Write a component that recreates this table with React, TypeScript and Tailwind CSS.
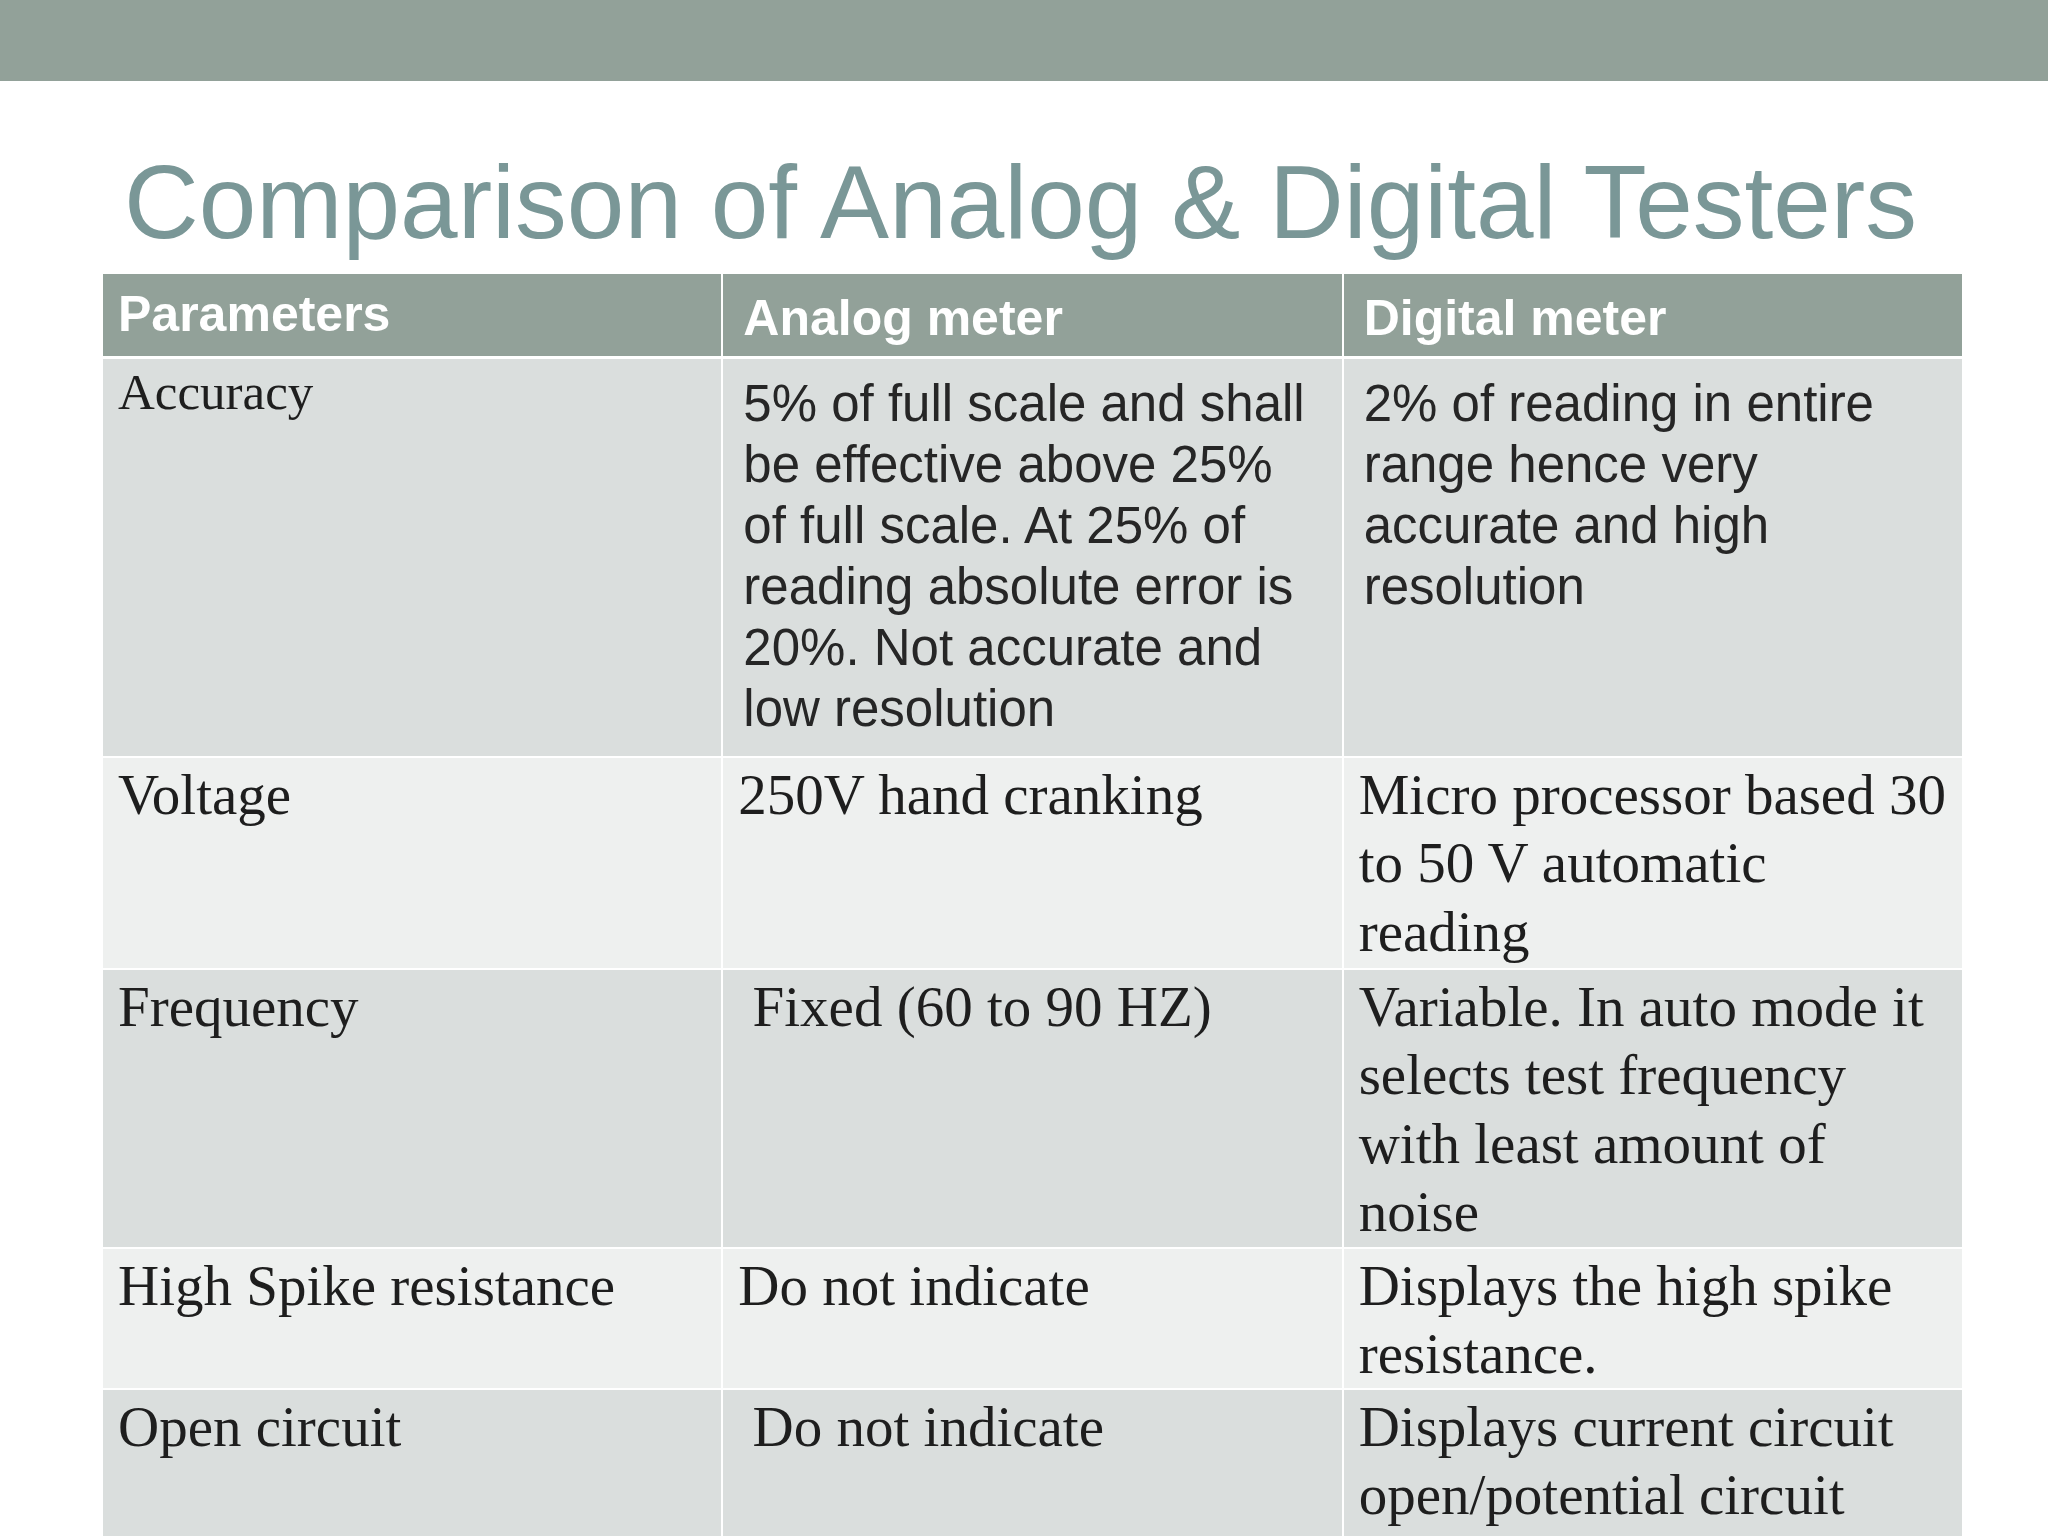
type Cell = {
	lines: string[];
	kind: "serif" | "sans";
	small?: boolean;
};

type Row = {
	height: string;
	bg: string;
	cells: Cell[];
};

const rows: Row[] = [
	{
		height: "h-[397px]",
		bg: "bg-[#dadedd]",
		cells: [
			{ lines: ["Accuracy"], kind: "serif", small: true },
			{
				lines: [
					"5% of full scale and shall",
					"be effective above 25%",
					"of full scale. At 25% of",
					"reading absolute error is",
					"20%. Not accurate and",
					"low resolution",
				],
				kind: "sans",
			},
			{
				lines: ["2% of reading in entire", "range hence very", "accurate and high", "resolution"],
				kind: "sans",
			},
		],
	},
	{
		height: "h-[210px]",
		bg: "bg-[#eef0ef]",
		cells: [
			{ lines: ["Voltage"], kind: "serif" },
			{ lines: ["250V hand cranking"], kind: "serif" },
			{ lines: ["Micro processor based 30", "to 50 V automatic", "reading"], kind: "serif" },
		],
	},
	{
		height: "h-[277px]",
		bg: "bg-[#dadedd]",
		cells: [
			{ lines: ["Frequency"], kind: "serif" },
			{ lines: ["\u00a0Fixed (60 to 90 HZ)"], kind: "serif" },
			{
				lines: ["Variable. In auto mode it", "selects test frequency", "with least amount of", "noise"],
				kind: "serif",
			},
		],
	},
	{
		height: "h-[139px]",
		bg: "bg-[#eef0ef]",
		cells: [
			{ lines: ["High Spike resistance"], kind: "serif" },
			{ lines: ["Do not indicate"], kind: "serif" },
			{ lines: ["Displays the high spike", "resistance."], kind: "serif" },
		],
	},
	{
		height: "h-[160px]",
		bg: "bg-[#dadedd]",
		cells: [
			{ lines: ["Open circuit"], kind: "serif" },
			{ lines: ["\u00a0Do not indicate"], kind: "serif" },
			{ lines: ["Displays current circuit", "open/potential circuit"], kind: "serif" },
		],
	},
];

function TableCell({ cell, bg }: { cell: Cell; bg: string }) {
	const style =
		cell.kind === "sans"
			? "pl-[20px] pt-[14px] font-['Liberation_Sans',Arial,sans-serif] text-[51px] leading-[61px] text-[#262626]"
			: cell.small
				? "pl-[15px] pt-[3px] font-['Liberation_Serif','Times_New_Roman',serif] text-[51px] leading-[61px] text-[#1e1e1e]"
				: "pl-[15px] pt-[3px] font-['Liberation_Serif','Times_New_Roman',serif] text-[57px] leading-[68.5px] text-[#1e1e1e]";

	return (
		<div className={`${bg} ${style} whitespace-nowrap overflow-hidden`}>
			{cell.lines.map((line) => (
				<div key={line}>{line}</div>
			))}
		</div>
	);
}

export default function App() {
	return (
		<div className="w-[2048px] h-[1536px] overflow-hidden bg-white">
			<div className="h-[81px] bg-[#92a199]" />
			<h1 className="mt-[70px] pl-[124px] font-['Liberation_Sans',Arial,sans-serif] text-[103.5px] leading-none text-[#7a9797]">
				Comparison of Analog &amp; Digital Testers
			</h1>
			<div className="mt-[19px] ml-[103px] w-[1859px] flex flex-col gap-[2px]">
				<div className="grid grid-cols-3 gap-x-[2px] h-[82px] mb-[1px] font-['Liberation_Sans',Arial,sans-serif] text-[50px] leading-[60px] font-bold text-white">
					<div className="bg-[#92a199] pl-[15px] pt-[10px]">Parameters</div>
					<div className="bg-[#92a199] pl-[20px] pt-[14px]">Analog meter</div>
					<div className="bg-[#92a199] pl-[20px] pt-[14px]">Digital meter</div>
				</div>
				{rows.map((row) => (
					<div key={row.cells[0].lines[0]} className={`grid grid-cols-3 gap-x-[2px] ${row.height}`}>
						{row.cells.map((cell, idx) => (
							<TableCell key={idx} cell={cell} bg={row.bg} />
						))}
					</div>
				))}
			</div>
		</div>
	);
}
